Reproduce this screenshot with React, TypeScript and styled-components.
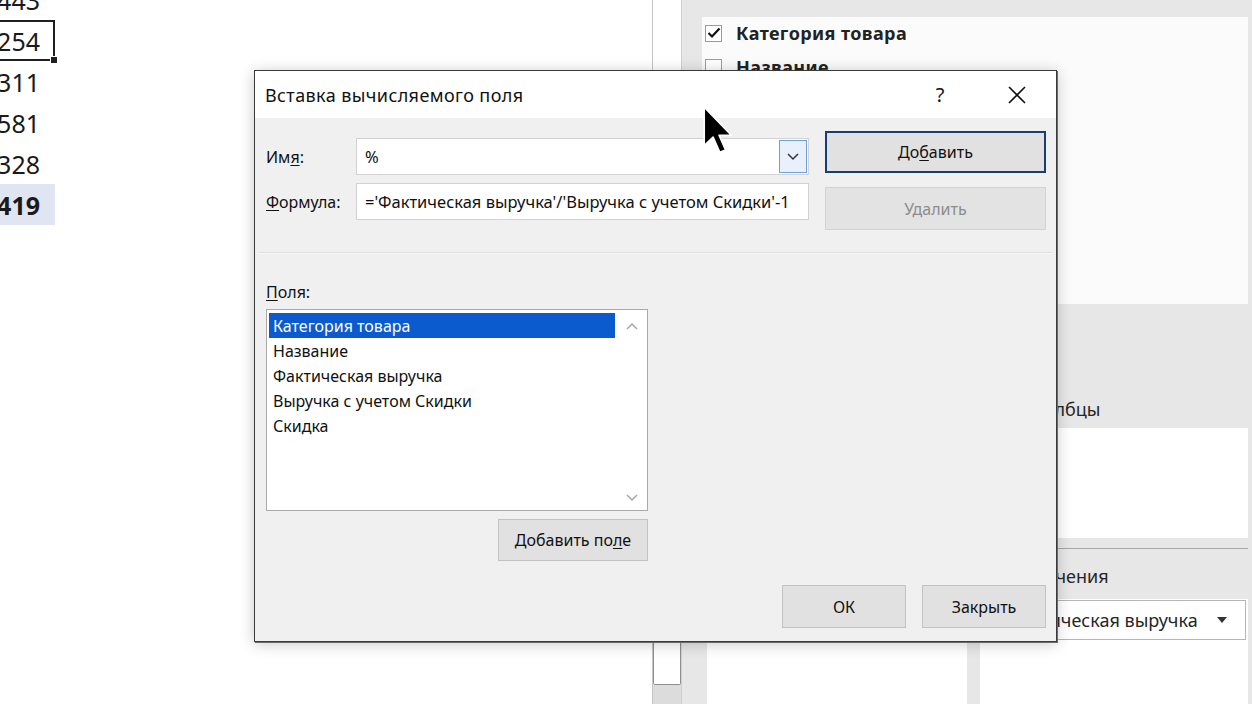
import React from 'react'
import styled, {createGlobalStyle} from 'styled-components'

const GlobalStyle = createGlobalStyle`
  html, body {
    margin: 0;
    padding: 0;
    overflow: hidden;
  }
  body {
    font-family: "Noto Sans", "Open Sans", sans-serif;
    color: #000;
  }
`

const Screen = styled.div`
  position: relative;
  display: flex;
  width: 1252px;
  height: 704px;
  overflow: hidden;
  background: #fff;
`

/* ---------- spreadsheet ---------- */

const Sheet = styled.div`
  width: 652px;
  display: flex;
  flex-direction: column;
  margin-top: -21px;
`

const Cell = styled.div<{$active?: boolean; $total?: boolean}>`
  position: relative;
  width: 55px;
  height: 41px;
  box-sizing: border-box;
  display: flex;
  align-items: center;
  justify-content: flex-end;
  padding-right: 15px;
  font-family: "Noto Sans", sans-serif;
  font-size: 25px;
  font-weight: ${p => (p.$total ? 700 : 400)};
  color: #1a1a1a;
  background: ${p => (p.$total ? '#dfe5f1' : 'transparent')};
  box-shadow: ${p =>
    p.$active ? 'inset 0 2px #1f1f1f, inset -2px 0 #1f1f1f, inset 0 -2px #1f1f1f' : 'none'};
`

const FillHandle = styled.span`
  position: absolute;
  right: -3px;
  bottom: -3px;
  width: 6px;
  height: 6px;
  background: #1f1f1f;
  border: 1px solid #fff;
`

const SheetScroll = styled.div`
  width: 28px;
  display: flex;
  flex-direction: column;
  justify-content: flex-end;
  border-left: 1px solid #c4c4c4;
  border-right: 1px solid #d0d0d0;
  background: #fff;
`

const ScrollThumb = styled.div`
  height: 300px;
  border: 1px solid #8f8f8f;
  border-top: none;
  border-radius: 0 0 2px 2px;
  background: #fff;
`

const ScrollTrack = styled.div`
  height: 19px;
  background: #dcdcdc;
`

/* ---------- field list pane ---------- */

const Pane = styled.div`
  flex: 1;
  display: flex;
  flex-direction: column;
  padding: 17px 4px 0 20px;
  background: #e7e7e7;
`

const FieldPanel = styled.div`
  height: 286px;
  padding: 1px 0 0 3px;
  background: #fbfbfb;
  display: flex;
  flex-direction: column;
  gap: 4px;
`

const FieldRow = styled.div`
  height: 30px;
  display: flex;
  align-items: center;
  gap: 14px;
  font-size: 18px;
  letter-spacing: 0.4px;
  font-weight: 700;
  color: #222;
`

const CheckBox = styled.span`
  width: 17px;
  height: 17px;
  box-sizing: border-box;
  border: 1px solid #9c9c9c;
  background: #fff;
  display: flex;
  align-items: center;
  justify-content: center;
`

const Hint = styled.div`
  height: 92px;
  padding: 30px 0 0 5px;
  box-sizing: border-box;
  font-size: 16px;
  color: #444;
`

const Areas = styled.div`
  flex: 1;
  margin-left: 5px;
  display: grid;
  grid-template-columns: 260px 1fr;
  grid-template-rows: 32px 110px 11px 50px 1fr;
  column-gap: 13px;
`

const AreaLabel = styled.div`
  display: flex;
  align-items: flex-start;
  padding-left: 44px;
  font-size: 18px;
  line-height: 26px;
  color: #262626;
`

const AreaLabelLower = styled(AreaLabel)`
  padding-top: 14px;
`

const AreaBox = styled.div`
  background: #fff;
  display: flex;
  flex-direction: column;
  padding: 0 2px 0 3px;
`

const AreaDivider = styled.div`
  grid-column: 1 / span 2;
  align-self: end;
  height: 1px;
  background: #a7a7a7;
`

const ValueItem = styled.div`
  height: 40px;
  margin-top: 1px;
  box-sizing: border-box;
  border: 1px solid #b5b5b5;
  display: flex;
  align-items: center;
  justify-content: space-between;
  padding: 0 18px 0 23px;
  font-size: 18px;
  color: #262626;
`

const DownTriangle = styled.span`
  width: 0;
  height: 0;
  border-left: 5px solid transparent;
  border-right: 5px solid transparent;
  border-top: 6px solid #333;
`

/* ---------- dialog ---------- */

const Dialog = styled.div`
  position: absolute;
  left: 254px;
  top: 70px;
  width: 803px;
  height: 572px;
  box-sizing: border-box;
  border: 1px solid #3a3a3a;
  background: #f0f0f0;
  box-shadow: 1px 1px 0 #6b6b6b, 0 2px 14px rgba(0, 0, 0, 0.22);
  display: flex;
  flex-direction: column;
`

const TitleBar = styled.div`
  height: 47px;
  display: flex;
  align-items: center;
  padding: 0 8px 0 10px;
  background: #fff;
`

const Title = styled.div`
  flex: 1;
  font-size: 18px;
  letter-spacing: 0.4px;
  color: #111;
`

const TitleButton = styled.div<{$w: number}>`
  width: ${p => p.$w}px;
  height: 100%;
  display: flex;
  align-items: center;
  justify-content: center;
  font-size: 20px;
  color: #111;
`

const Body = styled.div`
  flex: 1;
  display: flex;
  flex-direction: column;
  padding: 13px 10px 13px 11px;
`

const TopRow = styled.div`
  display: flex;
  align-items: flex-start;
  gap: 16px;
`

const FieldGrid = styled.div`
  display: grid;
  grid-template-columns: 90px 453px;
  row-gap: 8px;
  align-items: center;
  padding-top: 7px;
`

const Label = styled.label`
  font-size: 16px;
  color: #111;
  u {
    text-decoration-thickness: 1px;
    text-underline-offset: 2px;
  }
`

const TextBox = styled.div`
  height: 37px;
  box-sizing: border-box;
  border: 1px solid #d2d2d2;
  background: #fff;
  display: flex;
  align-items: center;
  padding-left: 8px;
  font-size: 16.5px;
  color: #111;
  white-space: nowrap;
`

const ComboText = styled.span`
  flex: 1;
`

const DropButton = styled.span`
  width: 28px;
  height: 33px;
  margin-right: 1px;
  box-sizing: border-box;
  border: 1px solid #6f9fd8;
  background: #e8f1fb;
  display: flex;
  align-items: center;
  justify-content: center;
`

const ButtonColumn = styled.div`
  display: flex;
  flex-direction: column;
  gap: 14px;
`

const DialogButton = styled.button<{$w: number; $h?: number; $default?: boolean}>`
  width: ${p => p.$w}px;
  height: ${p => p.$h ?? 42}px;
  box-sizing: border-box;
  border: ${p => (p.$default ? '2px solid #183c74' : '1px solid #c3c3c3')};
  background: #e1e1e1;
  font-family: "Noto Sans", "Open Sans", sans-serif;
  font-size: 16px;
  color: #111;
  padding: 0;
  &:disabled {
    color: #8c8c8c;
    background: #e3e3e3;
    border-color: #d3d3d3;
  }
  u {
    text-underline-offset: 2px;
  }
`

const Separator = styled.div`
  height: 1px;
  margin: 22px -6px 0 -7px;
  background: #e0e0e0;
  border-bottom: 1px solid #f8f8f8;
`

const FieldsLabel = styled(Label)`
  margin-top: 28px;
  line-height: 20px;
`

const ListColumn = styled.div`
  width: 382px;
  margin-top: 7px;
  display: flex;
  flex-direction: column;
  align-items: flex-end;
  gap: 8px;
`

const ListBox = styled.div`
  width: 382px;
  height: 202px;
  box-sizing: border-box;
  border: 1px solid #a9a9a9;
  background: #fff;
  display: flex;
`

const ListItems = styled.div`
  flex: 1;
  padding: 3px 2px 0 2px;
  display: flex;
  flex-direction: column;
`

const ListItem = styled.div<{$selected?: boolean}>`
  height: 25px;
  display: flex;
  align-items: center;
  padding-left: 4px;
  font-size: 16px;
  color: ${p => (p.$selected ? '#fff' : '#111')};
  background: ${p => (p.$selected ? '#0b5bcf' : 'transparent')};
`

const ListScroll = styled.div`
  width: 30px;
  display: flex;
  flex-direction: column;
  justify-content: space-between;
  align-items: center;
  padding: 12px 0 8px;
`

const Footer = styled.div`
  margin-top: auto;
  display: flex;
  justify-content: flex-end;
  gap: 16px;
`

const Cursor = styled.svg`
  position: absolute;
  left: 703px;
  top: 106px;
`

const Chevron = ({up, color = '#555'}: {up?: boolean; color?: string}) => (
  <svg width="12" height="8" viewBox="0 0 12 8">
    <polyline
      points={up ? '1,7 6,2 11,7' : '1,1 6,6 11,1'}
      fill="none"
      stroke={color}
      strokeWidth="1.5"
    />
  </svg>
)

const sheetRows = [
  {value: '443'},
  {value: '254', active: true},
  {value: '311'},
  {value: '581'},
  {value: '328'},
  {value: '419', total: true},
]

const fields = ['Категория товара', 'Название', 'Фактическая выручка', 'Выручка с учетом Скидки', 'Скидка']

const App: React.FunctionComponent = () => {
  return (
    <Screen>
      <GlobalStyle />

      <Sheet>
        {sheetRows.map(row => (
          <Cell key={row.value} $active={row.active} $total={row.total}>
            {row.value}
            {row.active && <FillHandle />}
          </Cell>
        ))}
      </Sheet>

      <SheetScroll>
        <ScrollThumb />
        <ScrollTrack />
      </SheetScroll>

      <Pane>
        <FieldPanel>
          <FieldRow>
            <CheckBox>
              <svg width="14" height="12" viewBox="0 0 14 12">
                <polyline points="1.5,6 5,9.5 12.5,1.5" fill="none" stroke="#111" strokeWidth="2.2" />
              </svg>
            </CheckBox>
            Категория товара
          </FieldRow>
          <FieldRow>
            <CheckBox />
            Название
          </FieldRow>
        </FieldPanel>

        <Hint>Перетащите поля в нужную область:</Hint>

        <Areas>
          <AreaLabel>Фильтры</AreaLabel>
          <AreaLabel>Столбцы</AreaLabel>
          <AreaBox />
          <AreaBox />
          <AreaDivider />
          <AreaLabelLower>Строки</AreaLabelLower>
          <AreaLabelLower>Значения</AreaLabelLower>
          <AreaBox />
          <AreaBox>
            <ValueItem>
              Фактическая выручка
              <DownTriangle />
            </ValueItem>
          </AreaBox>
        </Areas>
      </Pane>

      <Dialog>
        <TitleBar>
          <Title>Вставка вычисляемого поля</Title>
          <TitleButton $w={92}>?</TitleButton>
          <TitleButton $w={62}>
            <svg width="18" height="18" viewBox="0 0 18 18">
              <path d="M1 1 L17 17 M17 1 L1 17" stroke="#111" strokeWidth="1.6" />
            </svg>
          </TitleButton>
        </TitleBar>

        <Body>
          <TopRow>
            <FieldGrid>
              <Label>
                Им<u>я</u>:
              </Label>
              <TextBox>
                <ComboText>%</ComboText>
                <DropButton>
                  <Chevron color="#333" />
                </DropButton>
              </TextBox>
              <Label>
                <u>Ф</u>ормула:
              </Label>
              <TextBox>='Фактическая выручка'/'Выручка с учетом Скидки'-1</TextBox>
            </FieldGrid>

            <ButtonColumn>
              <DialogButton $w={221} $default>
                До<u>б</u>авить
              </DialogButton>
              <DialogButton $w={221} $h={43} disabled>
                Удалить
              </DialogButton>
            </ButtonColumn>
          </TopRow>

          <Separator />

          <FieldsLabel>
            <u>П</u>оля:
          </FieldsLabel>

          <ListColumn>
            <ListBox>
              <ListItems>
                {fields.map((name, i) => (
                  <ListItem key={name} $selected={i === 0}>
                    {name}
                  </ListItem>
                ))}
              </ListItems>
              <ListScroll>
                <Chevron up color="#a8a8a8" />
                <Chevron color="#a8a8a8" />
              </ListScroll>
            </ListBox>
            <DialogButton $w={150}>
              Добавить по<u>л</u>е
            </DialogButton>
          </ListColumn>

          <Footer>
            <DialogButton $w={124} $h={43}>
              ОК
            </DialogButton>
            <DialogButton $w={124} $h={43}>
              Закрыть
            </DialogButton>
          </Footer>
        </Body>
      </Dialog>

      <Cursor width="30" height="48" viewBox="0 0 12.5 20">
        <path
          d="M0.5 0.5 L0.5 16.5 L4.2 13 L7 19.3 L9.4 18.3 L6.7 12.2 L11.8 12.2 Z"
          fill="#000"
          stroke="#fff"
          strokeWidth="0.7"
          strokeLinejoin="round"
        />
      </Cursor>
    </Screen>
  )
}

export default App
